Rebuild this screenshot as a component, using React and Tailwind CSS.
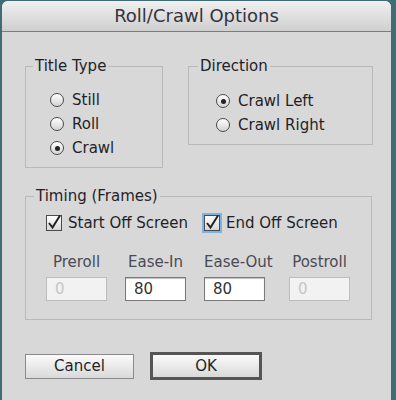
import React from 'react'

const font = { fontFamily: '"DejaVu Sans", "Liberation Sans", sans-serif' }

function Radio({ checked, label }) {
  return (
    <div className="flex items-center h-[24px]">
      <span className="w-[14px] h-[14px] rounded-full border border-[#4a4a4a] bg-gradient-to-b from-white to-[#d4d4d4] flex items-center justify-center">
        {checked && <span className="w-[5px] h-[5px] rounded-full bg-[#222]" />}
      </span>
      <span className="ml-[8px] text-[15px] leading-[18px] text-[#1f1f28]">{label}</span>
    </div>
  )
}

function Check({ label, focus }) {
  return (
    <div className="flex items-center">
      <span
        className={
          'w-[16px] h-[16px] border border-[#4a4a4a] bg-gradient-to-b from-white to-[#d6d6d6] flex items-center justify-center ' +
          (focus ? 'ring-2 ring-[#7fb2e0]' : '')
        }
      >
        <svg width="14" height="14" viewBox="0 0 14 14" className="overflow-visible">
          <path d="M2 7 L5.5 11.5 L13 -0.5" fill="none" stroke="#222" strokeWidth="2" />
        </svg>
      </span>
      <span className="ml-[6px] text-[15px] leading-[18px] text-[#1f1f28]">{label}</span>
    </div>
  )
}

function Field({ label, value, disabled, start }) {
  return (
    <div className={'flex flex-col w-[61px] ' + (start ? 'items-start' : 'items-center')}>
      <span className="text-[15px] leading-[18px] whitespace-nowrap text-[#4a4a55]">{label}</span>
      <div
        className={
          'mt-[6px] w-[61px] h-[24px] flex items-center pl-[8px] text-[15px] ' +
          (disabled
            ? 'bg-[#f2f2f2] border border-[#bdbdbd] text-[#c6c6c6]'
            : 'bg-white border border-[#7a7a7a] shadow-[inset_0_1px_1px_rgba(0,0,0,0.25)] text-[#333]')
        }
      >
        {value}
      </div>
    </div>
  )
}

export default function App() {
  return (
    <div style={font} className="w-[396px] h-[400px] bg-[#3f6c77] pl-[2px] pr-[5px] pt-[1px]">
      <div className="h-full bg-[#d8d8d8] rounded-t-[6px] overflow-hidden flex flex-col">
        {/* title bar */}
        <div className="h-[31px] shrink-0 bg-gradient-to-b from-[#f0f0f0] to-[#cfcfcf] border-b border-[#7d7d7d] flex items-center justify-center">
          <span className="text-[18px] leading-[22px] text-[#33333d]">Roll/Crawl Options</span>
        </div>

        <div className="pl-[23px] pt-[25px]">
          <div className="flex gap-[25px]">
            <fieldset className="w-[138px] h-[111px] border border-[#b9b9b9] pl-[7px]">
              <legend className="px-[2px] text-[15px] leading-[18px] text-[#1f1f28]">Title Type</legend>
              <div className="pl-[17px] pt-[13px]">
                <Radio label="Still" />
                <Radio label="Roll" />
                <Radio checked label="Crawl" />
              </div>
            </fieldset>
            <fieldset className="w-[185px] h-[88px] border border-[#b9b9b9] pl-[9px]">
              <legend className="px-[2px] text-[15px] leading-[18px] text-[#1f1f28]">Direction</legend>
              <div className="pl-[18px] pt-[14px]">
                <Radio checked label="Crawl Left" />
                <Radio label="Crawl Right" />
              </div>
            </fieldset>
          </div>

          <fieldset className="mt-[19px] w-[347px] h-[133px] border border-[#b9b9b9] pl-[8px]">
            <legend className="px-[2px] text-[15px] leading-[18px] text-[#1f1f28]">Timing (Frames)</legend>
            <div className="pl-[12px] pt-[9px] flex">
              <div className="w-[158px]">
                <Check label="Start Off Screen" />
              </div>
              <Check focus label="End Off Screen" />
            </div>
            <div className="pl-[12px] pt-[21px] flex">
              <Field label="Preroll" value="0" disabled />
              <div className="ml-[18px]">
                <Field label="Ease-In" value="80" />
              </div>
              <div className="ml-[18px]">
                <Field label="Ease-Out" value="80" start />
              </div>
              <div className="ml-[24px]">
                <Field label="Postroll" value="0" disabled />
              </div>
            </div>
          </fieldset>

          <div className="mt-[32px] flex items-center">
            <button className="w-[109px] h-[25px] border border-[#8a8a8a] bg-gradient-to-b from-[#fbfbfb] to-[#d9d9d9] text-[15px] text-[#1f1f28]">
              Cancel
            </button>
            <button className="ml-[16px] w-[112px] h-[28px] border-[3px] border-[#555] bg-gradient-to-b from-[#fbfbfb] to-[#d9d9d9] text-[15px] text-[#1f1f28]">
              OK
            </button>
          </div>
        </div>
      </div>
    </div>
  )
}
